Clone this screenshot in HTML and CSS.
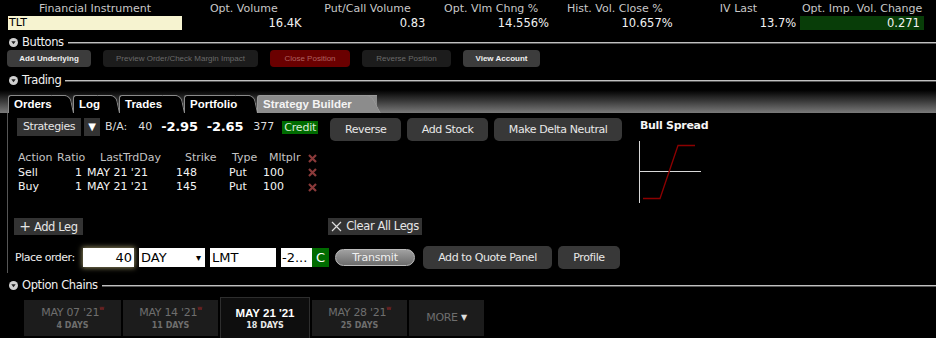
FILE: index.html
```html
<!DOCTYPE html>
<html>
<head>
<meta charset="utf-8">
<link rel="stylesheet" href="styles.css">
</head>
<body>
<div class="quote">
  <div class="qh">Financial Instrument</div>
  <div class="qh">Opt. Volume</div>
  <div class="qh">Put/Call Volume</div>
  <div class="qh">Opt. Vlm Chng %</div>
  <div class="qh">Hist. Vol. Close %</div>
  <div class="qh">IV Last</div>
  <div class="qh">Opt. Imp. Vol. Change</div>
  <div class="qv sym">TLT</div>
  <div class="qv">16.4K</div>
  <div class="qv">0.83</div>
  <div class="qv">14.556%</div>
  <div class="qv">10.657%</div>
  <div class="qv">13.7%</div>
  <div class="qv green">0.271</div>
</div>

<div class="sec sec-buttons">
  <svg class="sec-ico" width="9" height="9" viewBox="0 0 9 9"><circle cx="4.5" cy="4.5" r="4.5" fill="#d0d0d0"/><path d="M2.3 3.2 L6.7 3.2 L4.5 6.2 Z" fill="#222"/></svg>
  <span class="sec-title">Buttons</span>
  <span class="sec-line"></span>
</div>
<div class="btns">
  <div class="sbtn on w1">Add Underlying</div>
  <div class="sbtn off w2">Preview Order/Check Margin Impact</div>
  <div class="sbtn red w3">Close Position</div>
  <div class="sbtn off w4">Reverse Position</div>
  <div class="sbtn on w5">View Account</div>
</div>

<div class="sec sec-trading">
  <svg class="sec-ico" width="9" height="9" viewBox="0 0 9 9"><circle cx="4.5" cy="4.5" r="4.5" fill="#d0d0d0"/><path d="M2.3 3.2 L6.7 3.2 L4.5 6.2 Z" fill="#222"/></svg>
  <span class="sec-title">Trading</span>
  <span class="sec-line"></span>
</div>

<div class="tabstrip">
  <div class="tab t-orders"><span>Orders</span></div>
  <div class="tab t-log"><span>Log</span></div>
  <div class="tab t-trades"><span>Trades</span></div>
  <div class="tab t-port"><span>Portfolio</span></div>
  <div class="tab active t-sb"><span>Strategy Builder</span></div>
</div>

<div class="panel">
  <div class="main">
    <div class="row-a">
      <div class="dbtn strat">Strategies</div>
      <div class="dbtn drop">&#9660;</div>
      <span class="ba">B/A:</span>
      <span class="n40">40</span>
      <span class="big">-2.95</span>
      <span class="big">-2.65</span>
      <span class="n377">377</span>
      <span class="credit">Credit</span>
      <div class="gbtn rev">Reverse</div>
      <div class="gbtn addstock">Add Stock</div>
      <div class="gbtn delta">Make Delta Neutral</div>
    </div>
    <div class="legs">
      <div class="lh c1">Action</div>
      <div class="lh c2">Ratio</div>
      <div class="lh c3">LastTrdDay</div>
      <div class="lh c4">Strike</div>
      <div class="lh c5">Type</div>
      <div class="lh c6">Mltplr</div>
      <div class="lx"><svg width="9" height="9" viewBox="0 0 9 9"><path d="M1 1 L8 8 M8 1 L1 8" stroke="#8a3a3a" stroke-width="2.2"/></svg></div>

      <div class="lv">Sell</div>
      <div class="lv r">1</div>
      <div class="lv">MAY 21 '21</div>
      <div class="lv">148</div>
      <div class="lv">Put</div>
      <div class="lv">100</div>
      <div class="lx"><svg width="9" height="9" viewBox="0 0 9 9"><path d="M1 1 L8 8 M8 1 L1 8" stroke="#8a3a3a" stroke-width="2.2"/></svg></div>

      <div class="lv">Buy</div>
      <div class="lv r">1</div>
      <div class="lv">MAY 21 '21</div>
      <div class="lv">145</div>
      <div class="lv">Put</div>
      <div class="lv">100</div>
      <div class="lx"><svg width="9" height="9" viewBox="0 0 9 9"><path d="M1 1 L8 8 M8 1 L1 8" stroke="#8a3a3a" stroke-width="2.2"/></svg></div>
    </div>
    <div class="row-b">
      <div class="dbtn addleg"><span class="plus">+</span> Add Leg</div>
      <div class="dbtn clear"><svg width="11" height="11" viewBox="0 0 11 11"><path d="M1 1 L10 10 M10 1 L1 10" stroke="#ddd" stroke-width="1.2"/></svg> Clear All Legs</div>
    </div>
    <div class="row-c">
      <span class="po">Place order:</span>
      <div class="inp qty">40</div>
      <div class="inp day">DAY<span class="caret">&#9662;</span></div>
      <div class="inp lmt">LMT</div>
      <div class="inp px">-2...</div>
      <div class="cbox">C</div>
      <div class="transmit">Transmit</div>
      <div class="gbtn aqp">Add to Quote Panel</div>
      <div class="gbtn prof">Profile</div>
    </div>
  </div>
  <div class="side">
    <div class="bs-title">Bull Spread</div>
    <svg class="bs-chart" width="64" height="64" viewBox="0 0 64 64">
      <path d="M1.5 1 L1.5 63" stroke="#d8d8d8" stroke-width="1"/>
      <path d="M1 31.5 L63 31.5" stroke="#d8d8d8" stroke-width="1"/>
      <path d="M5 58.5 L22 58.5 L40 5.5 L57 5.5" stroke="#8c0000" stroke-width="1.3" fill="none"/>
    </svg>
  </div>
</div>

<div class="sec sec-chains">
  <svg class="sec-ico" width="9" height="9" viewBox="0 0 9 9"><circle cx="4.5" cy="4.5" r="4.5" fill="#d0d0d0"/><path d="M2.3 3.2 L6.7 3.2 L4.5 6.2 Z" fill="#222"/></svg>
  <span class="sec-title">Option Chains</span>
  <span class="sec-line"></span>
</div>

<div class="chains">
  <div class="ctab w97"><div class="cd">MAY 07 '21<sup>w</sup></div><div class="cs">4 DAYS</div></div>
  <div class="ctab w95"><div class="cd">MAY 14 '21<sup>w</sup></div><div class="cs">11 DAYS</div></div>
  <div class="ctab act"><div class="cd">MAY 21 '21</div><div class="cs">18 DAYS</div></div>
  <div class="ctab w95"><div class="cd">MAY 28 '21<sup>w</sup></div><div class="cs">25 DAYS</div></div>
  <div class="ctab more"><div class="cd">MORE <span class="mcar">&#9660;</span></div></div>
</div>
<div class="chain-line"></div>
</body>
</html>
```

FILE: styles.css
```css
html, body {
  margin: 0;
  padding: 0;
  background: #000;
}
body {
  width: 936px;
  height: 338px;
  overflow: hidden;
  font-family: "DejaVu Sans", "Verdana", sans-serif;
  font-size: 11px;
  color: #fff;
}

/* quote table */
.quote {
  display: grid;
  grid-template-columns: 174px repeat(6, 123.67px);
  padding: 2px 0 0 8px;
}
.qh {
  text-align: center;
  color: #c8c8c8;
  height: 14px;
  line-height: 14px;
  font-size: 11px;
}
.qv {
  text-align: right;
  padding-right: 4px;
  height: 14px;
  line-height: 14px;
  font-size: 11.5px;
  color: #f2f2f2;
}
.sym {
  background: #f6f3d0;
  color: #000;
  text-align: left;
  padding-left: 1px;
  font-size: 11px;
}
.green {
  background: #083d08;
}

/* section headers */
.sec {
  display: flex;
  align-items: center;
  height: 14px;
  padding-left: 9px;
}
.sec-buttons { margin-top: 5px; }
.sec-trading { margin-top: 6px; }
.sec-chains { margin-top: 5px; }
.sec-ico { flex: none; }
.sec-title {
  margin-left: 4px;
  font-size: 11.5px;
  letter-spacing: -0.4px;
  color: #f0f0f0;
}
.sec-line {
  flex: 1;
  height: 1px;
  background: #c0c0c0;
  margin-left: 4px;
  box-shadow: 0 1px 0 #555;
}

/* buttons row */
.btns {
  display: flex;
  gap: 12px;
  padding-left: 7px;
  margin-top: 1px;
}
.sbtn {
  height: 17px;
  line-height: 17px;
  border-radius: 4px;
  text-align: center;
  font-family: "Liberation Sans", Arial, sans-serif;
  font-size: 8px;
  box-sizing: border-box;
}
.sbtn.on { background: #3c3c3c; color: #f0f0f0; font-weight: bold; }
.sbtn.off { background: #1c1c1c; color: #6a6a6a; }
.sbtn.red { background: #6a0000; color: #b06060; }
.w1 { width: 84px; }
.w2 { width: 155px; }
.w3 { width: 80px; }
.w4 { width: 89px; }
.w5 { width: 77px; }

/* tab strip */
.tabstrip {
  margin-top: 3px;
  height: 23px;
  background: linear-gradient(to bottom, #000 0%, #111 15%, #7a7a7a 100%);
  display: flex;
  align-items: flex-end;
  padding-left: 8px;
}
.tab {
  position: relative;
  height: 18px;
  line-height: 18px;
  font-family: "Liberation Sans", Arial, sans-serif;
  font-weight: bold;
  font-size: 11.5px;
  color: #fff;
  margin-right: -3px;
}
.tab span {
  position: relative;
  z-index: 2;
  padding-left: 6px;
}
.tab::before {
  content: "";
  position: absolute;
  left: 0;
  top: 0;
  bottom: 0;
  right: 10px;
  background: #000;
  border: 1px solid #8a8a8a;
  border-right: none;
  border-bottom: none;
  border-radius: 3px 0 0 0;
  z-index: 1;
}
.tab::after {
  content: "";
  position: absolute;
  right: 2px;
  top: 0;
  bottom: 0;
  width: 18px;
  background: #000;
  border: 1px solid #8a8a8a;
  border-left: none;
  border-bottom: none;
  border-radius: 0 6px 0 0;
  transform: skewX(12deg);
  transform-origin: bottom left;
  z-index: 1;
}
.tab.active::before, .tab.active::after {
  background: #8c8c8c;
  border-color: #9a9a9a;
}
.tab.active { color: #f4f4f4; }
.tab.active::after { transform: skewX(28deg); width: 22px; right: 6px; }
.t-orders { width: 68px; }
.t-log { width: 49px; }
.t-trades { width: 68px; }
.t-port { width: 76px; }
.t-sb { width: 130px; }

/* trading panel */
.panel {
  margin-left: 7px;
  border-left: 1px solid #555;
  height: 160px;
  display: flex;
  box-sizing: border-box;
  padding-left: 9px;
}
.main {
  width: 623px;
  flex: none;
}
.row-a {
  display: flex;
  align-items: flex-start;
  margin-top: 5px;
  height: 23px;
}
.dbtn {
  background: #333;
  color: #e6e6e6;
  height: 18px;
  line-height: 18px;
  font-size: 11px;
  letter-spacing: -0.4px;
  text-align: center;
  box-sizing: border-box;
}
.strat { width: 64px; }
.drop { width: 16px; margin-left: 3px; font-size: 10px; color: #fff; letter-spacing: 0; }
.ba { margin-left: 5px; line-height: 18px; color: #ddd; }
.n40 { margin-left: 11px; line-height: 18px; color: #ddd; }
.big { margin-left: 9px; line-height: 18px; font-weight: bold; font-size: 13px; letter-spacing: -0.2px; }
.n377 { margin-left: 10px; line-height: 18px; color: #ddd; }
.credit {
  margin-left: 8px;
  margin-top: 3px;
  height: 13px;
  line-height: 13px;
  padding: 0 2px;
  background: #006b00;
  color: #d8ecd8;
  font-size: 11px;
  letter-spacing: -0.2px;
}
.gbtn {
  background: #383838;
  color: #e8e8e8;
  border-radius: 5px;
  height: 23px;
  line-height: 23px;
  text-align: center;
  font-size: 11px;
  letter-spacing: -0.4px;
  box-sizing: border-box;
}
.rev { width: 71px; margin-left: 12px; }
.addstock { width: 81px; margin-left: 6px; }
.delta { width: 128px; margin-left: 6px; }

.legs {
  display: grid;
  grid-template-columns: 39px 30px 89px 53px 34px 45px 14px;
  grid-auto-rows: 14.5px;
  margin-top: 10px;
  margin-left: 1px;
  line-height: 14.5px;
}
.lh { color: #c4c4c4; }
.c3 { padding-left: 13px; }
.c4 { padding-left: 9px; }
.c5 { padding-left: 3px; }
.c6 { padding-left: 6px; }
.lv { color: #f4f4f4; }
.lv.r { text-align: right; padding-right: 5px; }
.lx { display: flex; align-items: center; }

.row-b {
  display: flex;
  margin-top: 23px;
  height: 17px;
}
.addleg { width: 69px; margin-left: -3px; height: 17px; line-height: 17px; font-size: 11.5px; }
.plus { font-size: 14px; }
.clear {
  width: 94px;
  margin-left: 245px;
  height: 17px;
  line-height: 17px;
  font-size: 11.5px;
  display: flex;
  align-items: center;
  justify-content: center;
  gap: 4px;
}

.row-c {
  display: flex;
  align-items: center;
  margin-top: 11px;
  height: 23px;
}
.po { margin-left: -2px; font-size: 11px; letter-spacing: -0.5px; color: #eee; width: 68px; }
.inp {
  background: #fff;
  color: #000;
  height: 19px;
  line-height: 19px;
  font-size: 13px;
  box-sizing: border-box;
  padding: 0 2px;
  position: relative;
}
.qty {
  width: 51px;
  text-align: right;
  box-shadow: 0 0 5px 1px #8a835a;
}
.day { width: 66px; margin-left: 5px; }
.caret { position: absolute; right: 4px; top: 0; font-size: 10px; }
.lmt { width: 66px; margin-left: 5px; }
.px { width: 31px; margin-left: 5px; padding: 0 1px; }
.cbox {
  width: 17px;
  height: 19px;
  line-height: 19px;
  background: #006b00;
  color: #fff;
  font-size: 13px;
  text-align: center;
}
.transmit {
  width: 80px;
  height: 17px;
  line-height: 16px;
  margin-left: 6px;
  border-radius: 9px;
  background: linear-gradient(to bottom, #a0a0a0, #6c6c6c);
  border: 1px solid #bcbcbc;
  box-sizing: border-box;
  text-align: center;
  color: #f0f0f0;
  font-size: 11px;
  letter-spacing: -0.2px;
}
.aqp { width: 129px; margin-left: 8px; }
.prof { width: 62px; margin-left: 6px; }

.side {
  padding-top: 6px;
}
.bs-title {
  font-weight: bold;
  font-size: 11px;
  letter-spacing: -0.3px;
  color: #f4f4f4;
  height: 14px;
  line-height: 14px;
}
.bs-chart {
  display: block;
  margin-top: 7px;
  margin-left: -2px;
}

/* option chains */
.chains {
  display: flex;
  align-items: flex-end;
  gap: 2px;
  padding-left: 24px;
  margin-top: 5px;
  height: 42px;
}
.ctab {
  background: #1c1c1c;
  height: 36px;
  margin-bottom: 3px;
  text-align: center;
  box-sizing: border-box;
  padding-top: 6px;
}
.w97 { width: 97px; }
.w95 { width: 95px; }
.ctab.act {
  width: 90px;
  height: 42px;
  margin-bottom: 0;
  background: #0e0e0e;
  border: 1px solid #2e2e2e;
  border-bottom: none;
  padding-top: 8px;
}
.ctab.more { width: 75px; padding-top: 11px; }
.cd {
  font-size: 11px;
  letter-spacing: -0.3px;
  color: #6e6e6e;
  line-height: 14px;
}
.cd sup {
  font-size: 6px;
  color: #a02828;
  vertical-align: 6px;
  line-height: 0;
}
.cs {
  font-size: 8px;
  color: #6e6e6e;
  font-weight: bold;
  line-height: 11px;
}
.act .cd {
  color: #fff;
  font-family: "Liberation Sans", Arial, sans-serif;
  font-weight: bold;
  font-size: 11.5px;
  letter-spacing: 0;
}
.act .cs { color: #e8e8e8; }
.mcar { font-size: 8px; color: #ddd; vertical-align: 1px; }
.chain-line {
  margin-left: 16px;
  height: 1px;
  background: #2a2a2a;
}
```
